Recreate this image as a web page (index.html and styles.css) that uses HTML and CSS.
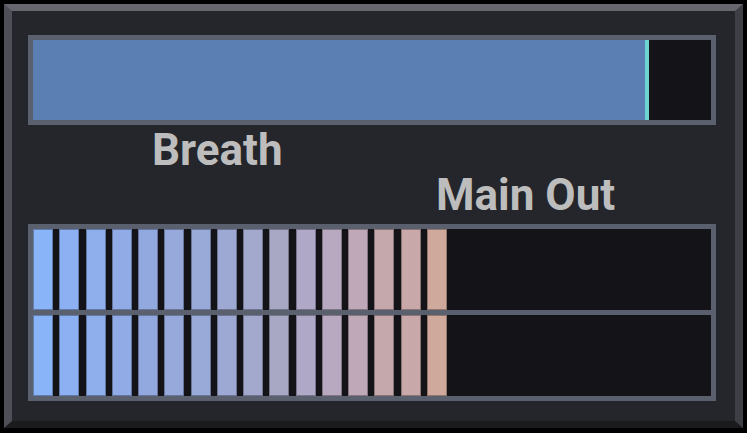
FILE: index.html
```html
<!DOCTYPE html>
<html lang="en">
<head>
    <meta charset="UTF-8">
    <meta name="viewport" content="width=device-width, initial-scale=1.0">
    <title>Breath / Main Out</title>
    <link rel="stylesheet" href="styles.css">
</head>
<body>
    <div class="panel">
        <div class="breath">
            <div class="breath-fill"></div>
            <div class="breath-cursor"></div>
        </div>

        <div class="labels">
            <div class="label label-breath">Breath</div>
            <div class="label label-out">Main Out</div>
        </div>

        <div class="meter">
            <div class="meter-row" id="meterLeft"></div>
            <div class="meter-row" id="meterRight"></div>
        </div>
    </div>

    <script>
        // level meter: one colour per lit segment, blue at the bottom to salmon at the top
        const palette = [
            '#8ab4f8', '#8cb0f2', '#8eaeec', '#90abe6',
            '#92a9e0', '#97a8db', '#99a9d8', '#9da8d3',
            '#a3a8cd', '#a8a8c5', '#afa8c7', '#b8a9c0',
            '#bfa9b8', '#c4a8ac', '#c8a8a8', '#cfaa9c'
        ];
        const level = 16;

        ['meterLeft', 'meterRight'].forEach(function (id) {
            const row = document.getElementById(id);
            for (let i = 0; i < level; i++) {
                const seg = document.createElement('div');
                seg.className = 'seg';
                seg.style.backgroundColor = palette[i];
                row.appendChild(seg);
            }
        });
    </script>
</body>
</html>
```

FILE: styles.css
```css
/* General Styles */
body {
    margin: 0;
    background: #000;
    font-family: 'Roboto', 'Liberation Sans', sans-serif;
}

.panel {
    margin: 4px;
    width: 739px;
    height: 424px;
    box-sizing: border-box;
    border-style: solid;
    border-width: 7px 8px 7px 8px;
    border-color: #67666f #3e3e45 #1b1b1e #4f4f57;
    background: #25262b;
    padding: 24px 19px 0 16px;
}

/* Breath bar */
.breath {
    height: 90px;
    box-sizing: border-box;
    border: 5px solid #5a606e;
    background: #141418;
    display: flex;
}

.breath-fill {
    width: 612px;
    background: #5b7fb3;
}

.breath-cursor {
    width: 4px;
    background: #6fd3cf;
}

/* Labels */
.labels {
    height: 99px;
    display: flex;
    flex-direction: column;
}

.label {
    font-size: 44px;
    font-weight: 700;
    line-height: 44px;
    color: #bdbdbd;
}

.label-breath {
    margin-top: 3px;
    padding-left: 124px;
}

.label-out {
    margin-top: 1px;
    padding-left: 408px;
}

/* Output meter */
.meter {
    border: 5px solid #5a606e;
    background: #5a606e;
    display: flex;
    flex-direction: column;
    gap: 5px;
}

.meter-row {
    height: 81px;
    background: #141418;
    display: flex;
    gap: 6.27px;
}

.seg {
    width: 20px;
    height: 100%;
    box-sizing: border-box;
    border: 1px solid rgba(0, 0, 0, 0.3);
}
```
